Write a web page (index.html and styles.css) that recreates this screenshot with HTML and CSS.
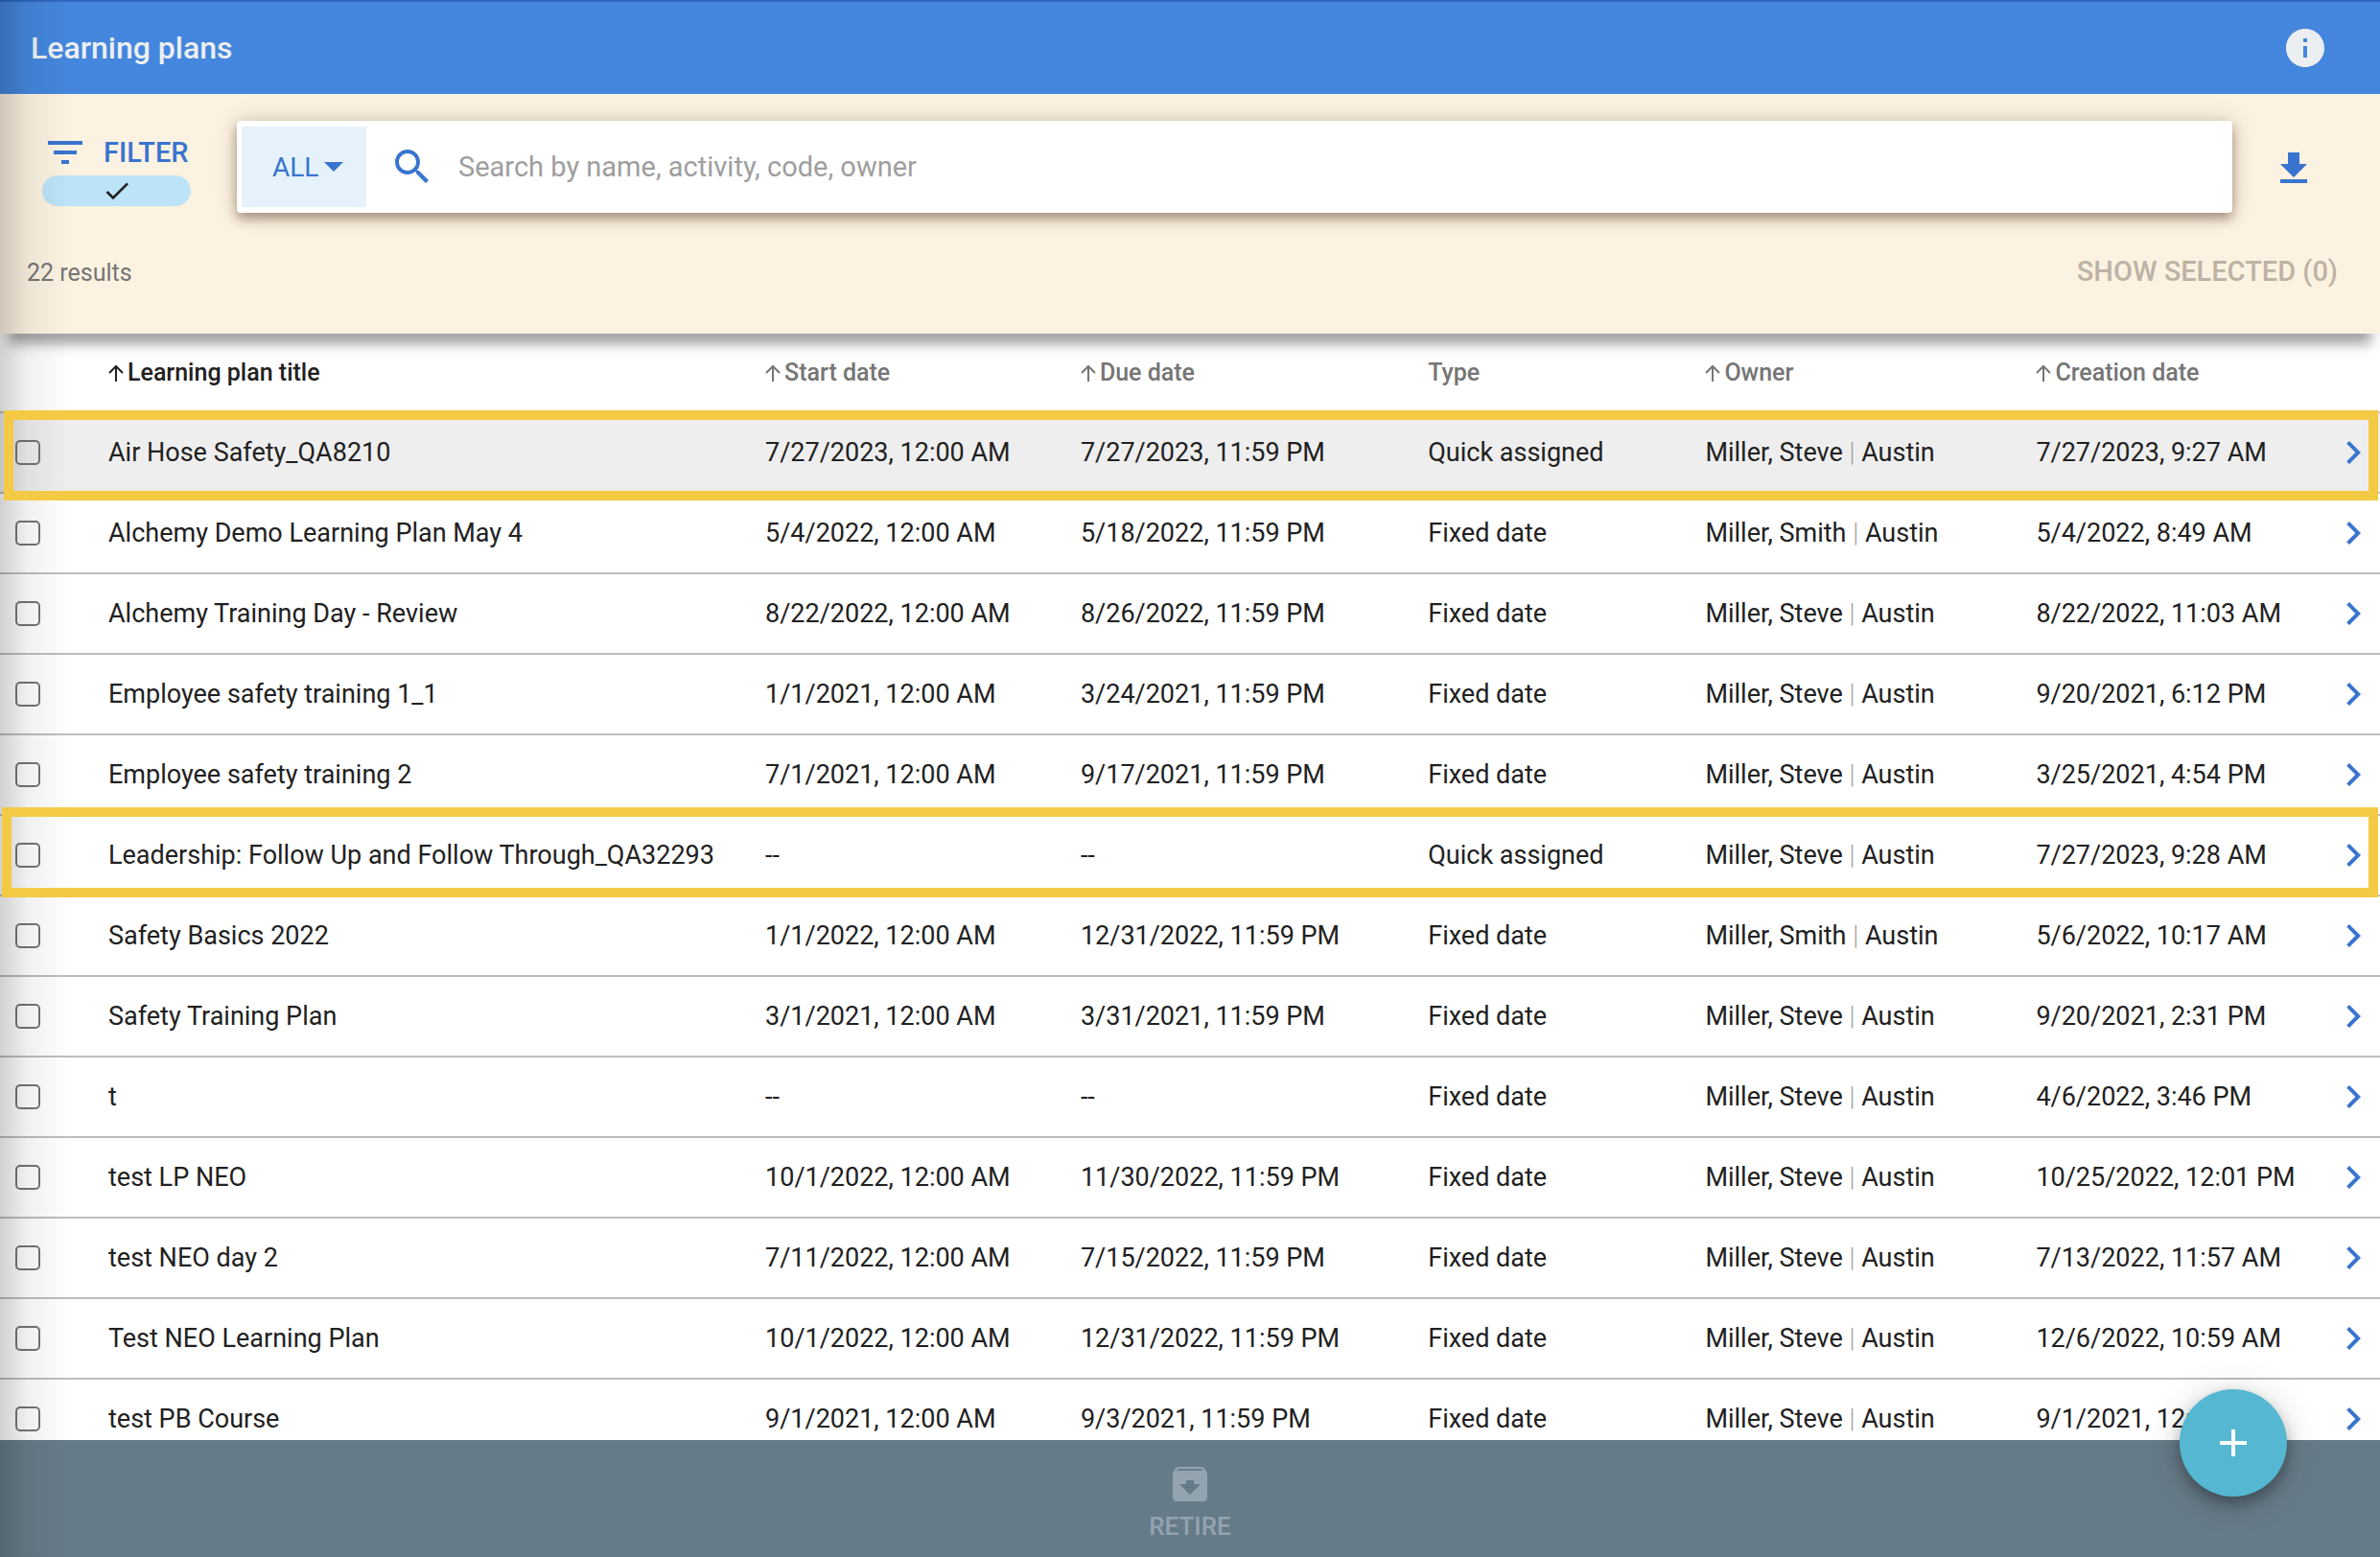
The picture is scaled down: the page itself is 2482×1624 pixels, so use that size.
FILE: index.html
```html
<!DOCTYPE html>
<html lang="en">
<head>
	<meta charset="UTF-8">
	<title>Learning plans</title>
	<link rel="stylesheet" href="styles.css">
</head>
<body>
	<svg class="sprite" aria-hidden="true">
		<symbol id="i-up" viewBox="0 0 16 18"><path d="M8 18V2M1 9l7-7 7 7" fill="none" stroke="currentColor" stroke-width="2"/></symbol>
		<symbol id="i-next" viewBox="0 0 24 24"><path d="M10 6L8.59 7.41 13.17 12l-4.58 4.59L10 18l6-6z"/></symbol>
	</svg>

	<div class="page">
		<header class="topbar">
			<h1>Learning plans</h1>
			<button type="button" class="icon-btn info" aria-label="Info">
				<svg class="icon" viewBox="0 0 24 24"><path d="M12 2C6.48 2 2 6.48 2 12s4.48 10 10 10 10-4.48 10-10S17.52 2 12 2zm1 15h-2v-6h2v6zm0-8h-2V7h2v2z"/></svg>
			</button>
		</header>

		<section class="panel">
			<div class="tools">
				<div class="filter">
					<button type="button" class="filter-btn">
						<svg class="icon" viewBox="0 0 24 24"><path d="M10 18h4v-2h-4v2zM3 6v2h18V6H3zm3 7h12v-2H6v2z"/></svg>
						FILTER
					</button>
					<div class="pill">
						<svg viewBox="0 0 24 24"><path d="M9 16.17L4.83 12l-1.42 1.41L9 19 21 7l-1.41-1.41z"/></svg>
					</div>
				</div>
				<form class="search">
					<button type="button" class="scope">
						ALL
						<svg viewBox="0 0 20 10"><path d="M0 0l10 10L20 0z"/></svg>
					</button>
					<label for="q" class="search-icon" aria-label="Search">
						<svg class="icon" viewBox="0 0 24 24"><path d="M15.5 14h-.79l-.28-.27C15.41 12.59 16 11.11 16 9.5 16 5.91 13.09 3 9.5 3S3 5.91 3 9.5 5.91 16 9.5 16c1.61 0 3.09-.59 4.23-1.57l.27.28v.79l5 4.99L20.49 19l-4.99-5zm-6 0C7.01 14 5 11.99 5 9.5S7.01 5 9.5 5 14 7.01 14 9.5 11.99 14 9.5 14z"/></svg>
					</label>
					<input type="text" id="q" placeholder="Search by name, activity, code, owner">
				</form>
				<button type="button" class="icon-btn download" aria-label="Download">
					<svg class="icon" viewBox="0 0 24 24"><path d="M19 9h-4V3H9v6H5l7 7 7-7zM5 17v2h14v-2H5z"/></svg>
				</button>
			</div>
			<div class="summary">
				<span class="count">22 results</span>
				<button type="button" class="show-selected" disabled>SHOW SELECTED (0)</button>
			</div>
		</section>

		<main class="list">
			<table>
				<colgroup>
					<col class="c-check">
					<col class="c-title">
					<col class="c-start">
					<col class="c-due">
					<col class="c-type">
					<col class="c-owner">
					<col class="c-created">
					<col>
				</colgroup>
				<thead>
					<tr>
						<th></th>
						<th class="sorted"><svg><use href="#i-up"/></svg>Learning plan title</th>
						<th><svg><use href="#i-up"/></svg>Start date</th>
						<th><svg><use href="#i-up"/></svg>Due date</th>
						<th>Type</th>
						<th><svg><use href="#i-up"/></svg>Owner</th>
						<th><svg><use href="#i-up"/></svg>Creation date</th>
						<th></th>
					</tr>
				</thead>
				<tbody>
					<tr class="active marked">
						<td><input type="checkbox" aria-label="Air Hose Safety_QA8210"></td>
						<td>Air Hose Safety_QA8210</td>
						<td>7/27/2023, 12:00 AM</td>
						<td>7/27/2023, 11:59 PM</td>
						<td>Quick assigned</td>
						<td>Miller, Steve <i>|</i> Austin</td>
						<td>7/27/2023, 9:27 AM</td>
						<td><a href="#" aria-label="Open"><svg class="icon"><use href="#i-next"/></svg></a></td>
					</tr>
					<tr>
						<td><input type="checkbox" aria-label="Alchemy Demo Learning Plan May 4"></td>
						<td>Alchemy Demo Learning Plan May 4</td>
						<td>5/4/2022, 12:00 AM</td>
						<td>5/18/2022, 11:59 PM</td>
						<td>Fixed date</td>
						<td>Miller, Smith <i>|</i> Austin</td>
						<td>5/4/2022, 8:49 AM</td>
						<td><a href="#" aria-label="Open"><svg class="icon"><use href="#i-next"/></svg></a></td>
					</tr>
					<tr>
						<td><input type="checkbox" aria-label="Alchemy Training Day - Review"></td>
						<td>Alchemy Training Day - Review</td>
						<td>8/22/2022, 12:00 AM</td>
						<td>8/26/2022, 11:59 PM</td>
						<td>Fixed date</td>
						<td>Miller, Steve <i>|</i> Austin</td>
						<td>8/22/2022, 11:03 AM</td>
						<td><a href="#" aria-label="Open"><svg class="icon"><use href="#i-next"/></svg></a></td>
					</tr>
					<tr>
						<td><input type="checkbox" aria-label="Employee safety training 1_1"></td>
						<td>Employee safety training 1_1</td>
						<td>1/1/2021, 12:00 AM</td>
						<td>3/24/2021, 11:59 PM</td>
						<td>Fixed date</td>
						<td>Miller, Steve <i>|</i> Austin</td>
						<td>9/20/2021, 6:12 PM</td>
						<td><a href="#" aria-label="Open"><svg class="icon"><use href="#i-next"/></svg></a></td>
					</tr>
					<tr>
						<td><input type="checkbox" aria-label="Employee safety training 2"></td>
						<td>Employee safety training 2</td>
						<td>7/1/2021, 12:00 AM</td>
						<td>9/17/2021, 11:59 PM</td>
						<td>Fixed date</td>
						<td>Miller, Steve <i>|</i> Austin</td>
						<td>3/25/2021, 4:54 PM</td>
						<td><a href="#" aria-label="Open"><svg class="icon"><use href="#i-next"/></svg></a></td>
					</tr>
					<tr class="marked">
						<td><input type="checkbox" aria-label="Leadership: Follow Up and Follow Through_QA32293"></td>
						<td>Leadership: Follow Up and Follow Through_QA32293</td>
						<td>--</td>
						<td>--</td>
						<td>Quick assigned</td>
						<td>Miller, Steve <i>|</i> Austin</td>
						<td>7/27/2023, 9:28 AM</td>
						<td><a href="#" aria-label="Open"><svg class="icon"><use href="#i-next"/></svg></a></td>
					</tr>
					<tr>
						<td><input type="checkbox" aria-label="Safety Basics 2022"></td>
						<td>Safety Basics 2022</td>
						<td>1/1/2022, 12:00 AM</td>
						<td>12/31/2022, 11:59 PM</td>
						<td>Fixed date</td>
						<td>Miller, Smith <i>|</i> Austin</td>
						<td>5/6/2022, 10:17 AM</td>
						<td><a href="#" aria-label="Open"><svg class="icon"><use href="#i-next"/></svg></a></td>
					</tr>
					<tr>
						<td><input type="checkbox" aria-label="Safety Training Plan"></td>
						<td>Safety Training Plan</td>
						<td>3/1/2021, 12:00 AM</td>
						<td>3/31/2021, 11:59 PM</td>
						<td>Fixed date</td>
						<td>Miller, Steve <i>|</i> Austin</td>
						<td>9/20/2021, 2:31 PM</td>
						<td><a href="#" aria-label="Open"><svg class="icon"><use href="#i-next"/></svg></a></td>
					</tr>
					<tr>
						<td><input type="checkbox" aria-label="t"></td>
						<td>t</td>
						<td>--</td>
						<td>--</td>
						<td>Fixed date</td>
						<td>Miller, Steve <i>|</i> Austin</td>
						<td>4/6/2022, 3:46 PM</td>
						<td><a href="#" aria-label="Open"><svg class="icon"><use href="#i-next"/></svg></a></td>
					</tr>
					<tr>
						<td><input type="checkbox" aria-label="test LP NEO"></td>
						<td>test LP NEO</td>
						<td>10/1/2022, 12:00 AM</td>
						<td>11/30/2022, 11:59 PM</td>
						<td>Fixed date</td>
						<td>Miller, Steve <i>|</i> Austin</td>
						<td>10/25/2022, 12:01 PM</td>
						<td><a href="#" aria-label="Open"><svg class="icon"><use href="#i-next"/></svg></a></td>
					</tr>
					<tr>
						<td><input type="checkbox" aria-label="test NEO day 2"></td>
						<td>test NEO day 2</td>
						<td>7/11/2022, 12:00 AM</td>
						<td>7/15/2022, 11:59 PM</td>
						<td>Fixed date</td>
						<td>Miller, Steve <i>|</i> Austin</td>
						<td>7/13/2022, 11:57 AM</td>
						<td><a href="#" aria-label="Open"><svg class="icon"><use href="#i-next"/></svg></a></td>
					</tr>
					<tr>
						<td><input type="checkbox" aria-label="Test NEO Learning Plan"></td>
						<td>Test NEO Learning Plan</td>
						<td>10/1/2022, 12:00 AM</td>
						<td>12/31/2022, 11:59 PM</td>
						<td>Fixed date</td>
						<td>Miller, Steve <i>|</i> Austin</td>
						<td>12/6/2022, 10:59 AM</td>
						<td><a href="#" aria-label="Open"><svg class="icon"><use href="#i-next"/></svg></a></td>
					</tr>
					<tr>
						<td><input type="checkbox" aria-label="test PB Course"></td>
						<td>test PB Course</td>
						<td>9/1/2021, 12:00 AM</td>
						<td>9/3/2021, 11:59 PM</td>
						<td>Fixed date</td>
						<td>Miller, Steve <i>|</i> Austin</td>
						<td>9/1/2021, 12:00 AM</td>
						<td><a href="#" aria-label="Open"><svg class="icon"><use href="#i-next"/></svg></a></td>
					</tr>
				</tbody>
			</table>
		</main>

		<footer class="actions">
			<button type="button" class="retire" disabled>
				<svg class="icon" viewBox="0 0 24 24"><path d="M20.54 5.23l-1.39-1.68C18.88 3.21 18.47 3 18 3H6c-.47 0-.88.21-1.16.55L3.46 5.23C3.17 5.57 3 6.02 3 6.5V19c0 1.1.9 2 2 2h14c1.1 0 2-.9 2-2V6.5c0-.48-.17-.93-.46-1.27zM12 17.5L6.5 12H10v-2h4v2h3.5L12 17.5zM5.12 5l.81-1h12l.94 1H5.12z"/></svg>
				RETIRE
			</button>
			<button type="button" class="fab" aria-label="Add">
				<svg class="icon" viewBox="0 0 24 24"><path d="M19 13h-6v6h-2v-6H5v-2h6V5h2v6h6v2z"/></svg>
			</button>
		</footer>
	</div>
</body>
</html>
```
FILE: styles.css
```css
*{
	margin: 0;
	padding: 0;
	box-sizing: border-box;
}
body{
	font-family: Roboto, sans-serif;
	font-size: 27px;
	color: #212121;
	background-color: #fff;
}
button{
	border: none;
	background: none;
	font-family: inherit;
	color: inherit;
	cursor: pointer;
}
svg{
	display: block;
	fill: currentColor;
}
.sprite{
	position: absolute;
	width: 0;
	height: 0;
}
.icon{
	width: 48px;
	height: 48px;
}
.page{
	position: relative;
	display: flex;
	flex-direction: column;
	height: 100vh;
}
.page::before{
	content: "";
	position: absolute;
	top: 0;
	bottom: 0;
	left: 0;
	width: 72px;
	background: linear-gradient(to right, rgba(0,0,0,.18), rgba(0,0,0,.06) 40%, rgba(0,0,0,0));
	pointer-events: none;
	z-index: 2;
}

/* top bar */
.topbar{
	display: flex;
	align-items: center;
	justify-content: space-between;
	height: 98px;
	padding: 0 54px 0 32px;
	border-top: 2px solid #2f66c0;
	background-color: #4486dd;
	color: #eceff1;
}
.topbar h1{
	font-size: 32px;
	font-weight: 500;
}

/* filter and search */
.panel{
	position: relative;
	height: 250px;
	padding-top: 28px;
	background-color: #fcf2e1;
	box-shadow: 0 20px 12px -9px rgba(0,0,0,.36);
	z-index: 1;
}
.tools{
	display: flex;
	align-items: center;
	padding: 0 66px 0 44px;
}
.filter{
	width: 155px;
	margin-top: 2px;
	margin-right: 48px;
}
.filter-btn{
	display: flex;
	align-items: center;
	gap: 16px;
	font-size: 29px;
	font-weight: 500;
	color: #3874cf;
}
.pill{
	display: flex;
	justify-content: center;
	align-items: center;
	height: 32px;
	border-radius: 16px;
	background-color: #bce3f8;
}
.pill svg{
	width: 32px;
	height: 32px;
}
.search{
	flex: 1;
	display: flex;
	align-items: center;
	height: 96px;
	padding: 6px 5px;
	border-radius: 4px;
	background-color: #fff;
	box-shadow: 0 6px 12px rgba(60,30,10,.4), 0 0 24px rgba(60,30,10,.18);
}
.scope{
	display: flex;
	align-items: center;
	gap: 6px;
	width: 130px;
	height: 84px;
	padding-left: 32px;
	background-color: #e5f2fc;
	font-size: 28px;
	color: #3874cf;
}
.scope svg{
	width: 20px;
	height: 10px;
}
.search-icon{
	margin: 0 24px;
	color: #3874cf;
}
.search input{
	flex: 1;
	border: none;
	outline: none;
	font-family: inherit;
	font-size: 29px;
	color: #212121;
}
.search input::placeholder{
	color: #9e9e9e;
}
.download{
	margin-top: 6px;
	margin-left: 40px;
	color: #3874cf;
}
.summary{
	display: flex;
	align-items: baseline;
	justify-content: space-between;
	margin-top: 44px;
	padding: 0 44px 0 28px;
	line-height: 36px;
}
.count{
	font-size: 25px;
	color: #757575;
}
.show-selected{
	font-size: 29px;
	font-weight: 500;
	color: #bdb2a5;
}

/* plans table */
.list{
	flex: 1;
	min-height: 0;
	overflow: hidden;
}
table{
	width: 100%;
	table-layout: fixed;
	border-collapse: separate;
	border-spacing: 0;
}
.c-check{ width: 113px; }
.c-title{ width: 27.6%; }
.c-start{ width: 13.25%; }
.c-due{ width: 14.6%; }
.c-type{ width: 11.65%; }
.c-owner{ width: 13.9%; }
.c-created{ width: 12%; }
th, td{
	border-bottom: 2px solid #bdbdbd;
	text-align: left;
	white-space: nowrap;
}
th{
	height: 83px;
	font-size: 25px;
	font-weight: 500;
	color: #757575;
}
th svg{
	display: inline-block;
	width: 16px;
	height: 18px;
	margin-right: 4px;
	vertical-align: -1px;
}
th.sorted{
	color: #212121;
}
td{
	height: 84px;
}
td i{
	font-style: normal;
	font-weight: 300;
	color: #9e9e9e;
}
td input{
	appearance: none;
	display: block;
	width: 26px;
	height: 26px;
	margin-left: 16px;
	border: 2px solid #757575;
	border-radius: 5px;
}
td a{
	display: block;
	width: 48px;
	margin-left: auto;
	margin-right: 4px;
	color: #3874cf;
}
.active{
	background-color: #eee;
}
/* highlighted plans */
.marked{
	position: relative;
}
.marked td:first-child::after{
	content: "";
	position: absolute;
	top: -9px;
	right: 2px;
	bottom: -1px;
	left: 2px;
	border: 10px solid #f4ca45;
	pointer-events: none;
	z-index: 3;
}
.active.marked td:first-child::after{
	top: -3px;
	bottom: -7px;
	left: 4px;
}

/* bottom bar */
.actions{
	position: relative;
	display: flex;
	justify-content: center;
	height: 122px;
	padding-top: 22px;
	background-color: #667b88;
}
.retire{
	display: flex;
	flex-direction: column;
	align-items: center;
	align-self: flex-start;
	gap: 5px;
	font-size: 26px;
	font-weight: 500;
	color: #94a3b0;
}
.fab{
	position: absolute;
	right: 97px;
	bottom: 63px;
	display: flex;
	align-items: center;
	justify-content: center;
	width: 112px;
	height: 112px;
	border-radius: 50%;
	background-color: #55b7d1;
	color: #fff;
	box-shadow: 0 8px 16px rgba(0,0,0,.3), 0 4px 40px rgba(0,0,0,.15);
}
```
